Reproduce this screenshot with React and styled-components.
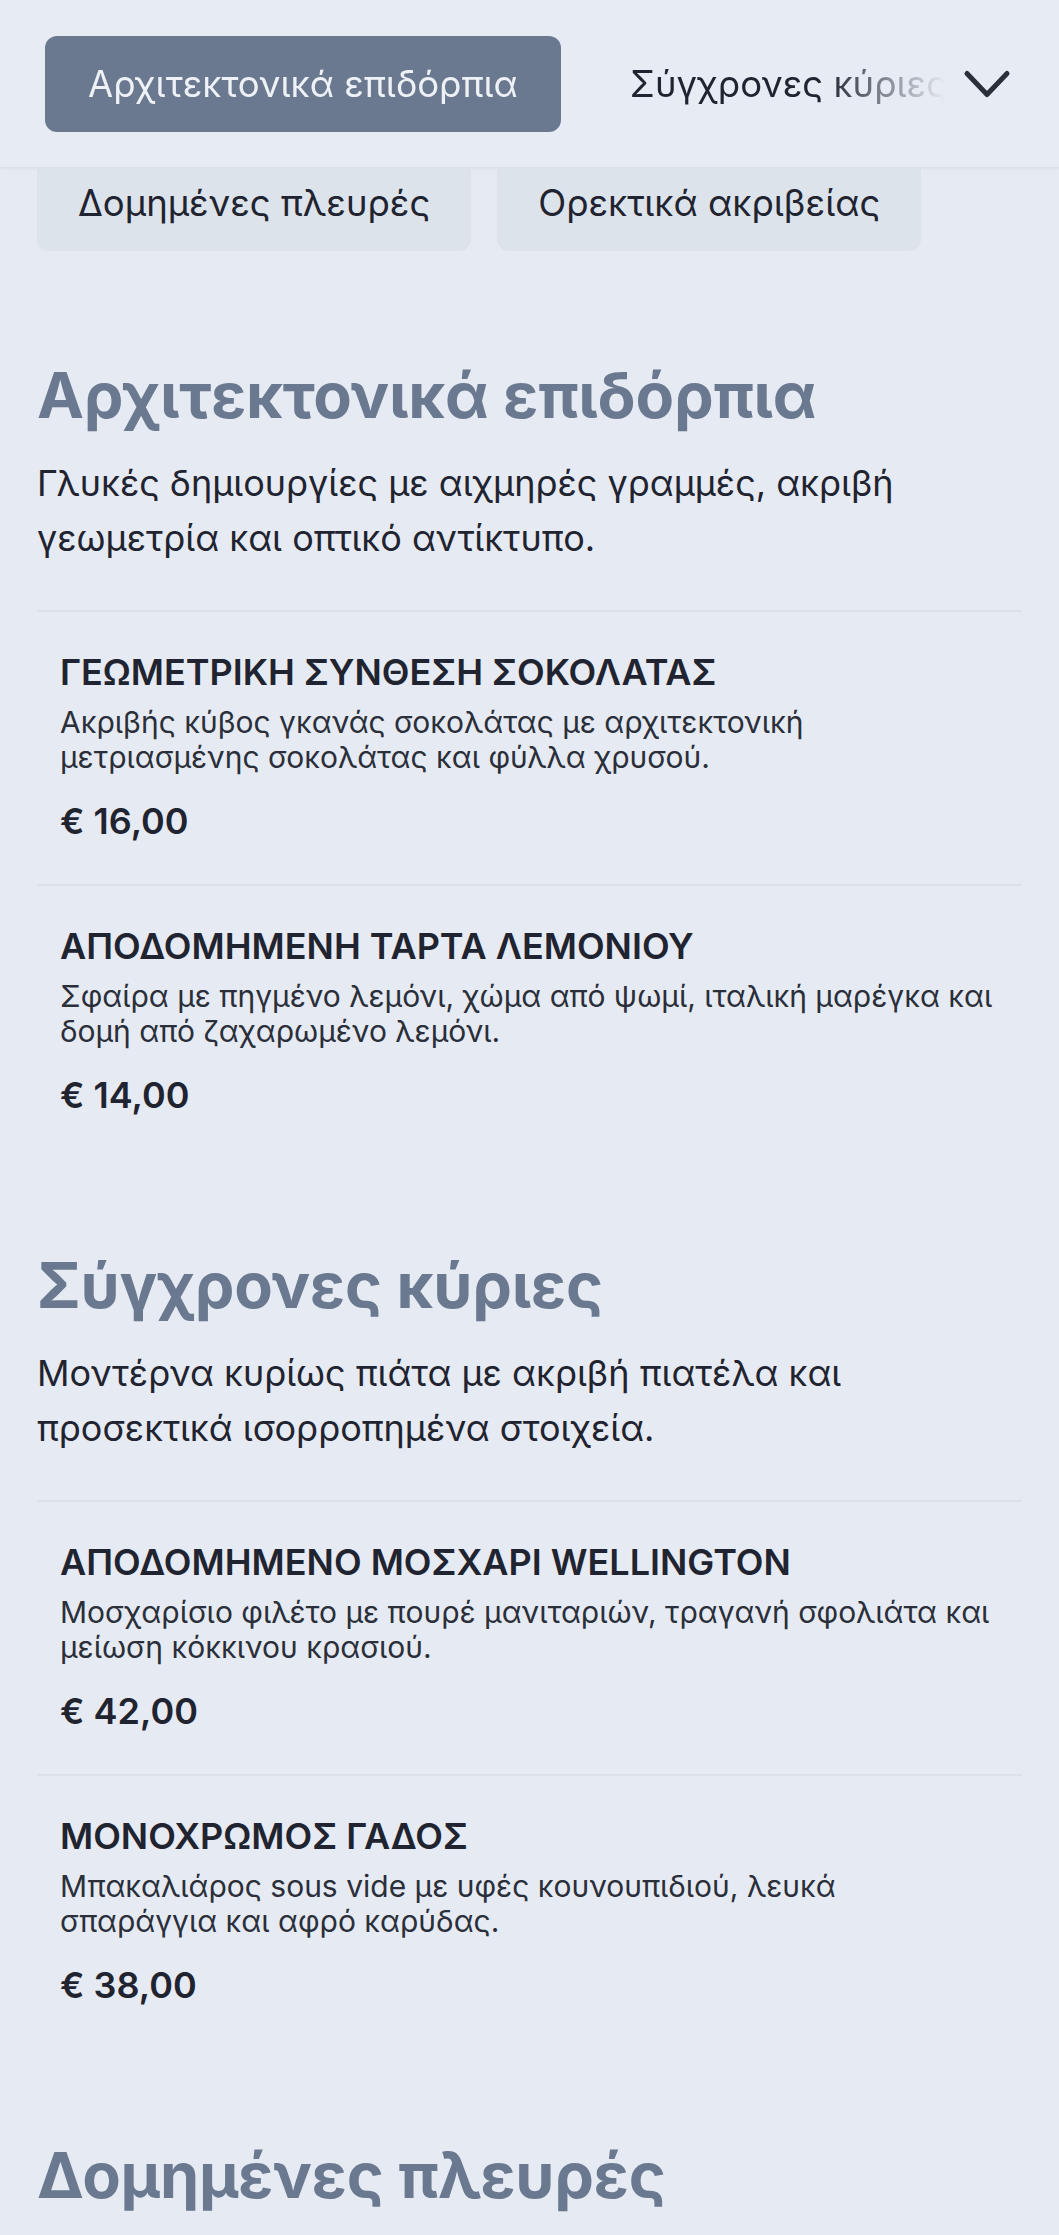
import React from 'react';
import styled, { createGlobalStyle } from 'styled-components';

const GlobalStyle = createGlobalStyle`
    html, body {
        margin: 0;
        padding: 0;
        background: #e6eaf2;
        font-family: Inter, 'Noto Sans', 'Liberation Sans', sans-serif;
        color: #1f2430;
    }
    * {
        box-sizing: border-box;
    }
`;

const Header = styled.header`
    display: flex;
    align-items: center;
    height: 168px;
    padding: 0 30px 0 45px;
    background: #e7ebf3;
    border-bottom: 1px solid #dbe0e8;
    box-shadow: 0 1px 3px rgba(30, 40, 60, 0.05);
`;

const TabScroller = styled.nav`
    flex: 1;
    display: flex;
    gap: 26px;
    overflow: hidden;
    white-space: nowrap;
    mask-image: linear-gradient(to right, #000 calc(100% - 120px), transparent 100%);
    -webkit-mask-image: linear-gradient(to right, #000 calc(100% - 120px), transparent 100%);
`;

const Tab = styled.button`
    flex: none;
    height: 96px;
    padding: 0 43px;
    border: none;
    border-radius: 12px;
    font-family: inherit;
    font-size: 36.5px;
    font-weight: 400;
    color: ${({ active }) => (active ? '#eef1f6' : '#1f2430')};
    background: ${({ active }) => (active ? '#6b7990' : 'transparent')};
    cursor: pointer;
`;

const ChevronButton = styled.button`
    flex: none;
    width: 84px;
    height: 96px;
    display: flex;
    align-items: center;
    justify-content: center;
    border: none;
    background: transparent;
    padding: 0;
    color: #2a2f3a;
`;

const PillRow = styled.div`
    display: flex;
    gap: 26px;
    padding: 0 37px;
`;

const Pill = styled.button`
    height: 83px;
    padding: 0 41px 13px;
    border: none;
    border-radius: 0 0 12px 12px;
    background: #dde3eb;
    font-family: inherit;
    font-size: 36.5px;
    color: #1f2430;
    white-space: nowrap;
`;

const Main = styled.main`
    display: flex;
    flex-direction: column;
    gap: 92px;
    padding: 109px 37px 80px;
`;

const Section = styled.section`
    display: flex;
    flex-direction: column;
`;

const SectionTitle = styled.h2`
    margin: 0;
    font-size: 63px;
    line-height: 71px;
    font-weight: 700;
    letter-spacing: -0.2px;
    color: #6b7990;
`;

const SectionDesc = styled.p`
    margin: 25px 0 44px;
    font-size: 36px;
    line-height: 55px;
    color: #1f2430;
`;

const Item = styled.article`
    border-top: 2px solid #dce1e9;
    padding: 40px 23px 43px;
`;

const ItemTitle = styled.h3`
    margin: 0;
    font-size: 36px;
    line-height: 40px;
    font-weight: 600;
    color: #1f2430;
`;

const ItemDesc = styled.p`
    margin: 13px 0 26px;
    max-width: 938px;
    font-size: 30px;
    line-height: 35px;
    color: #2a2f3a;
`;

const Price = styled.div`
    font-size: 36px;
    line-height: 40px;
    font-weight: 600;
    color: #1f2430;
`;

const categories = [
    {
        id: 'desserts',
        title: 'Αρχιτεκτονικά επιδόρπια',
        description: 'Γλυκές δημιουργίες με αιχμηρές γραμμές, ακριβή γεωμετρία και οπτικό αντίκτυπο.',
        items: [
            {
                name: 'ΓΕΩΜΕΤΡΙΚΗ ΣΥΝΘΕΣΗ ΣΟΚΟΛΑΤΑΣ',
                description: 'Ακριβής κύβος γκανάς σοκολάτας με αρχιτεκτονική μετριασμένης σοκολάτας και φύλλα χρυσού.',
                price: '€ 16,00'
            },
            {
                name: 'ΑΠΟΔΟΜΗΜΕΝΗ ΤΑΡΤΑ ΛΕΜΟΝΙΟΥ',
                description: 'Σφαίρα με πηγμένο λεμόνι, χώμα από ψωμί, ιταλική μαρέγκα και δομή από ζαχαρωμένο λεμόνι.',
                price: '€ 14,00'
            }
        ]
    },
    {
        id: 'mains',
        title: 'Σύγχρονες κύριες',
        description: 'Μοντέρνα κυρίως πιάτα με ακριβή πιατέλα και προσεκτικά ισορροπημένα στοιχεία.',
        items: [
            {
                name: 'ΑΠΟΔΟΜΗΜΕΝΟ ΜΟΣΧΑΡΙ WELLINGTON',
                description: 'Μοσχαρίσιο φιλέτο με πουρέ μανιταριών, τραγανή σφολιάτα και μείωση κόκκινου κρασιού.',
                price: '€ 42,00'
            },
            {
                name: 'ΜΟΝΟΧΡΩΜΟΣ ΓΑΔΟΣ',
                description: 'Μπακαλιάρος sous vide με υφές κουνουπιδιού, λευκά σπαράγγια και αφρό καρύδας.',
                price: '€ 38,00'
            }
        ]
    },
    {
        id: 'sides',
        title: 'Δομημένες πλευρές',
        description: '',
        items: []
    }
];

const ChevronDown = () => (
    <svg width="60" height="60" viewBox="0 0 24 24" fill="none" stroke="currentColor"
        strokeWidth="2" strokeLinecap="round" strokeLinejoin="round">
        <path d="M4 7.8l8 8.4 8-8.4" />
    </svg>
);

const App = () => (
    <>
        <GlobalStyle />
        <Header>
            <TabScroller>
                <Tab active>Αρχιτεκτονικά επιδόρπια</Tab>
                <Tab>Σύγχρονες κύριες</Tab>
            </TabScroller>
            <ChevronButton aria-label="Περισσότερα">
                <ChevronDown />
            </ChevronButton>
        </Header>
        <PillRow>
            <Pill>Δομημένες πλευρές</Pill>
            <Pill>Ορεκτικά ακριβείας</Pill>
        </PillRow>
        <Main>
            {categories.map(cat => (
                <Section key={cat.id}>
                    <SectionTitle>{cat.title}</SectionTitle>
                    {cat.description && <SectionDesc>{cat.description}</SectionDesc>}
                    {cat.items.map(item => (
                        <Item key={item.name}>
                            <ItemTitle>{item.name}</ItemTitle>
                            <ItemDesc>{item.description}</ItemDesc>
                            <Price>{item.price}</Price>
                        </Item>
                    ))}
                </Section>
            ))}
        </Main>
    </>
);

export default App;
